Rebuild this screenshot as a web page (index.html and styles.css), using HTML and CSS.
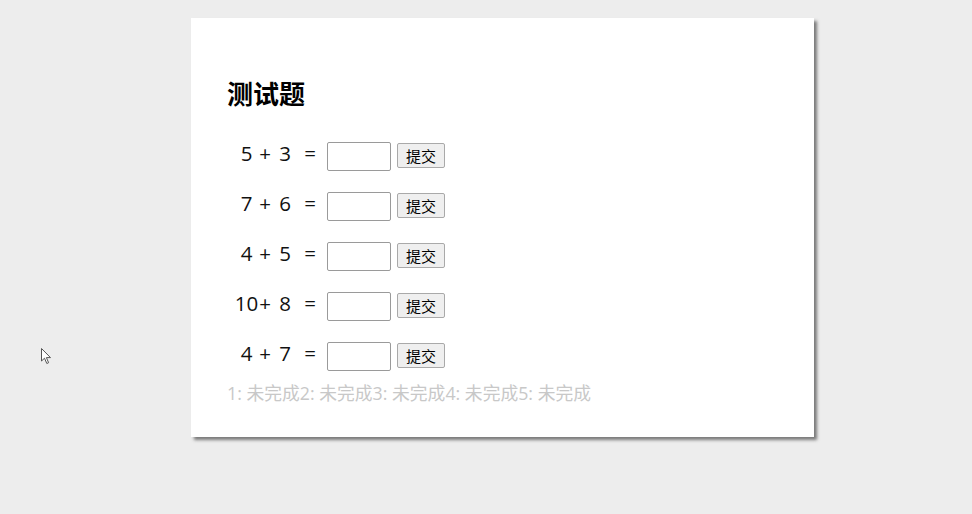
FILE: index.html
```html
<!DOCTYPE html>
<html lang="zh">
<head>
<meta charset="utf-8">
<title>测试题</title>
<link rel="stylesheet" href="styles.css">
</head>
<body>
<div class="card">
  <h2 class="title">测试题</h2>
  <div class="row"><div class="expr"><span class="n1">5</span><span class="op">+</span><span class="n2">3</span><span class="eq">=</span></div><input class="ans" type="text"><button class="btn">提交</button></div>
  <div class="row"><div class="expr"><span class="n1">7</span><span class="op">+</span><span class="n2">6</span><span class="eq">=</span></div><input class="ans" type="text"><button class="btn">提交</button></div>
  <div class="row"><div class="expr"><span class="n1">4</span><span class="op">+</span><span class="n2">5</span><span class="eq">=</span></div><input class="ans" type="text"><button class="btn">提交</button></div>
  <div class="row"><div class="expr"><span class="n1">10</span><span class="op">+</span><span class="n2">8</span><span class="eq">=</span></div><input class="ans" type="text"><button class="btn">提交</button></div>
  <div class="row"><div class="expr"><span class="n1">4</span><span class="op">+</span><span class="n2">7</span><span class="eq">=</span></div><input class="ans" type="text"><button class="btn">提交</button></div>
  <div class="status">1: 未完成2: 未完成3: 未完成4: 未完成5: 未完成</div>
</div>
<svg class="cursor" width="12" height="18" viewBox="0 0 12 18"><path d="M0.5 0.5 L0.5 13 L3.5 10.2 L5.8 15.5 L7.6 14.7 L5.4 9.6 L9.5 9.6 Z" fill="#fff" stroke="#555" stroke-width="1"/></svg>
</body>
</html>
```
FILE: styles.css
```css
html, body {
  margin: 0;
  padding: 0;
}
body {
  background: #ededed;
  font-family: "Open Sans", "Noto Sans CJK SC", sans-serif;
  height: 514px;
  overflow: hidden;
}
.card {
  box-sizing: border-box;
  width: 623px;
  height: 419px;
  margin: 18px 0 0 191px;
  background: #fff;
  box-shadow: 3px 3px 3px #7a7a7a;
  padding: 60px 36px 0 36px;
}
.title {
  margin: 0 0 23px 0;
  font-family: "Noto Sans CJK SC", sans-serif;
  font-size: 26px;
  font-weight: 700;
  line-height: 30px;
  color: #000;
}
.row {
  display: flex;
  align-items: center;
  height: 50px;
  color: #000;
}
.expr {
  display: flex;
  align-items: center;
  padding-bottom: 6px;
  font-size: 20.5px;
  line-height: 24px;
  color: #111;
}
.n1 {
  display: flex;
  justify-content: center;
  width: 19px;
  margin-left: 10px;
  white-space: nowrap;
}
.op {
  width: 12px;
  margin-left: 3px;
  text-align: center;
}
.n2 {
  width: 12px;
  margin-left: 8px;
  text-align: center;
}
.eq {
  width: 14px;
  margin-left: 12px;
  text-align: center;
}
.ans {
  box-sizing: border-box;
  width: 64px;
  height: 29px;
  margin: 0 0 0 10px;
  border: 1px solid #9a9a9a;
  border-radius: 2px;
  padding: 0 4px;
  background: #fff;
}
.btn {
  box-sizing: border-box;
  width: 48px;
  height: 25px;
  margin: 0 0 1px 6px;
  padding: 0;
  border: 1px solid #a9a9a9;
  border-radius: 2px;
  background: #efefef;
  font-family: "Noto Sans CJK SC", sans-serif;
  font-size: 15px;
  line-height: 20px;
  color: #000;
}
.status {
  padding-top: 2px;
  font-family: "Open Sans", "Noto Sans CJK SC", sans-serif;
  font-size: 17.8px;
  line-height: 20px;
  color: #c8c8c8;
  white-space: nowrap;
}
.cursor {
  position: absolute;
  left: 41px;
  top: 348px;
}
```
